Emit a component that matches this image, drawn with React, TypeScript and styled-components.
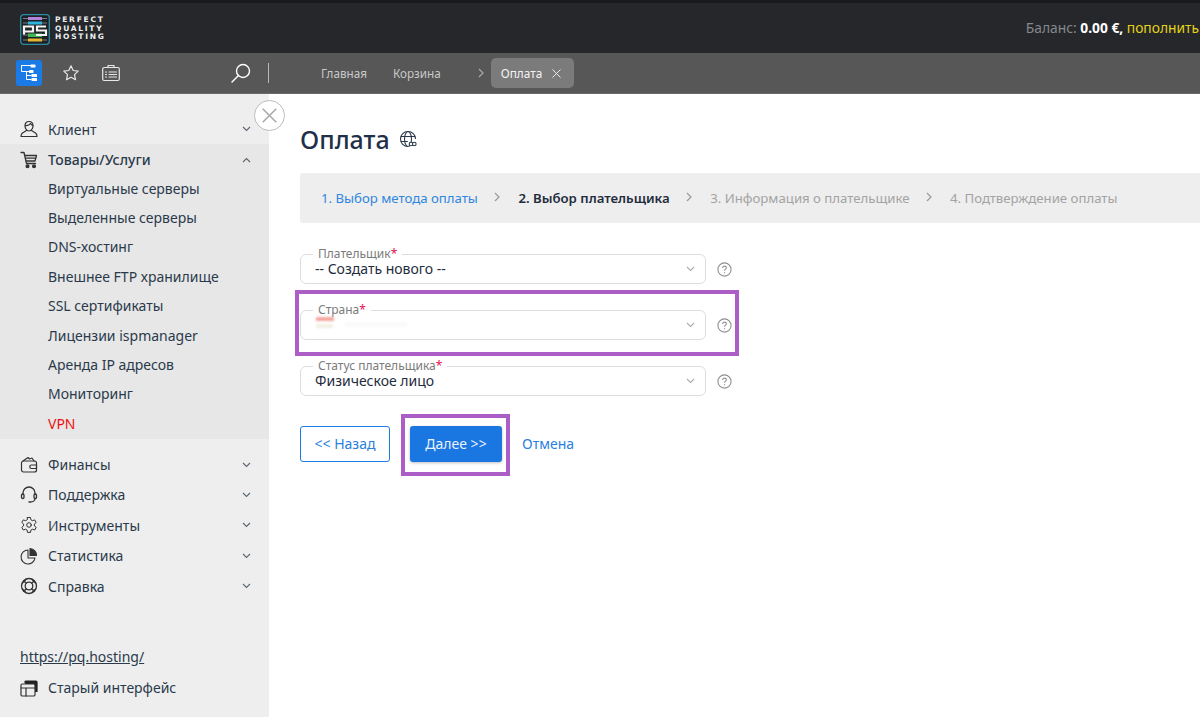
import React from "react";
import styled, { createGlobalStyle } from "styled-components";

const Global = createGlobalStyle`
  html, body { margin: 0; padding: 0; background: #fff; }
  body { font-family: "Noto Sans", "Open Sans", sans-serif; font-size: 14px; color: #2b3a4b; overflow: hidden; }
  * { box-sizing: border-box; }
`;

const Page = styled.div`
  width: 1200px; height: 723px; display: flex; flex-direction: column; overflow: hidden;
`;
const Header = styled.header`
  height: 53px; flex: none; background: #25272b; border-top: 3px solid #1a191e;
  display: flex; align-items: center; justify-content: space-between; padding: 0 0 0 20px;
`;
const Logo = styled.div`display: flex; align-items: center; gap: 4px; margin-top: 2px;`;
const LogoWords = styled.div`
  display: flex; flex-direction: column; font-family: "DejaVu Sans", sans-serif; font-size: 7.5px; line-height: 8.8px;
  font-weight: 700; color: #eceff1; letter-spacing: 1.75px; text-transform: uppercase; margin-left: 1px;
`;
const Balance = styled.div`
  font-size: 13.8px; color: #85888c; white-space: nowrap; margin-top: -1px; padding-right: 1px;
  b { color: #fff; font-weight: 700; }
  span { color: #e6d21a; }
`;
const Toolbar = styled.div`
  height: 41px; flex: none; background: #575757; display: flex; align-items: center; border-bottom: 1px solid #6a6a6a;
`;
const ToolIcons = styled.div`
  width: 269px; flex: none; display: flex; align-items: center; padding-left: 16px; position: relative; height: 100%;
`;
const ActiveTool = styled.div`
  width: 26px; height: 26px; border-radius: 3px; background: #1a7be6; display: flex; align-items: center; justify-content: center;
`;
const ToolBtn = styled.div`
  width: 18px; height: 18px; margin-left: ${p => p.$ml}px; display: flex; align-items: center; justify-content: center; color: #e8e8e8;
`;
const SearchBtn = styled.div`margin-left: auto; margin-right: 17px; display: flex; color: #fff;`;
const Divider = styled.div`width: 1px; height: 20px; background: #b9b9b9;`;
const Crumbs = styled.nav`
  display: flex; align-items: center; font-size: 11.7px; color: #c9c9c9; padding-left: 52px; height: 100%;
`;
const Crumb = styled.span`margin-right: 26px;`;
const CrumbArrow = styled.span`display: flex; margin: 0 7px 0 37px; color: #a9a9a9;`;
const ActiveCrumb = styled.div`
  height: 30px; border-radius: 5px; background: #7b7b7b; color: #f4f4f4; display: flex; align-items: center; gap: 10px; padding: 0 13px 0 10px; font-size: 11.8px;
`;
const Body = styled.div`flex: 1; display: flex; min-height: 0; position: relative;`;
const Sidebar = styled.aside`
  width: 269px; flex: none; height: 623px; background: #eeeeee; padding-top: 20px; display: flex; flex-direction: column;
`;
const MenuRow = styled.div`
  height: ${p => p.$h || 30.4}px; display: flex; align-items: center; padding: ${p => (p.$bold ? "2px" : "0")} 18px 0 20px; font-size: 14px;
  color: #2b3a4b; font-weight: ${p => (p.$bold ? 500 : 400)};
`;
const MenuIcon = styled.span`width: 18px; height: 18px; display: flex; margin-right: 10px; color: #333;`;
const MenuLabel = styled.span`flex: 1;`;
const Chevron = styled.span`display: flex; color: #5b6670;`;
const OpenGroup = styled.div`background: #e7e7e7; margin-bottom: 10.500px; padding-bottom: 1px;`;
const SubItem = styled.div`
  height: 29.4px; display: flex; align-items: center; padding-left: 48px; font-size: 14px; color: ${p => (p.$red ? "#ee1111" : "#2b3a4b")};
`;
const SideFoot = styled.div`margin-top: 41px;`;
const FootLink = styled.a`
  display: block; padding-left: 20px; height: 30px; line-height: 30px; color: #2b3a4b; font-size: 14px; text-decoration: underline;
`;
const CloseBall = styled.div`
  position: absolute; left: 254px; top: 6px; width: 31px; height: 31px; border-radius: 50%; background: #fff; border: 1px solid #bdbdbd;
  display: flex; align-items: center; justify-content: center; color: #a8a8a8;
`;
const Main = styled.main`flex: 1; padding: 29px 0 0 31px; min-width: 0;`;
const Title = styled.h1`
  margin: 0; display: flex; align-items: center; gap: 9px; font-size: 25px; line-height: 32px; font-weight: 500; color: #1f3049;
`;
const StepsBar = styled.div`
  margin-top: 18px; height: 50px; background: #eeeeee; border-radius: 3px 0 0 3px; display: flex; align-items: center; padding-left: 21px; font-size: 13.2px; white-space: nowrap;
`;
const Step = styled.span`
  color: ${p => (p.$state === "done" ? "#2f86e0" : p.$state === "now" ? "#1f2c3d" : "#a3a3a3")};
  font-weight: ${p => (p.$state === "now" ? 600 : 400)};
`;
const StepArrow = styled.span`display: flex; margin: -2px 18.500px 0 16px; color: #9a9a9a;`;
const Fields = styled.div`margin-top: 31px; display: flex; flex-direction: column; gap: 26px;`;
const FieldRow = styled.div`position: relative; display: flex; align-items: center; gap: 11px; width: 434px;`;
const SelectBox = styled.div`
  position: relative; width: 406px; height: 30px; border: 1px solid #dddddd; border-radius: 6px; padding: 0 10px 0 14px;
  font-size: 14px; line-height: 22px; color: #1f2c3d; background: #fff; display: flex; justify-content: space-between; align-items: center;
`;
const FloatLabel = styled.label`
  position: absolute; left: 12px; top: -8px; padding: 0 5px; background: #fff; font-size: 12px; line-height: 14px; color: #7b7b7b;
  i { color: #e6114d; font-style: normal; }
`;
const Help = styled.span`display: flex; color: #8f8f8f;`;
const SelectChevron = styled.span`display: flex; color: #a6aeb6;`;
const Blur = styled.span`display: inline-block; position: absolute; filter: blur(1px);`;
const Flag = styled(Blur)`left: 15px; top: 6px; width: 18px; height: 4px; background: #f4a79e;`;
const FlagLow = styled(Blur)`left: 15px; top: 13px; width: 17px; height: 4px; background: #f2efe6;`;
const Smudge = styled(Blur)`left: 44px; top: 11px; width: 62px; height: 5px; background: #fafafa;`;
const Highlight = styled.div`
  position: absolute; left: -5px; top: -20px; width: 444px; height: 66px; border: 4px solid #ab5fc6; pointer-events: none;
`;
const Actions = styled.div`margin-top: 30px; display: flex; align-items: center; font-size: 14px;`;
const BackBtn = styled.button`
  width: 90px; height: 36px; border: 1px solid #1a7be6; border-radius: 3px; background: #fff; color: #2a7fe0; font: inherit; font-size: 14px; padding: 0 0 2px;
`;
const NextWrap = styled.div`position: relative; margin-left: 20px;`;
const NextBtn = styled.button`
  display: block; width: 92px; height: 36px; border: 0; border-radius: 3px; background: #1a76e0; color: #e9f2fc; font: inherit; font-size: 14px; padding: 0 0 2px;
  box-shadow: 0 1px 3px rgba(0,0,0,.25);
`;
const NextMark = styled.div`
  position: absolute; left: -9px; top: -12px; width: 109px; height: 62px; border: 4px solid #ab5fc6; pointer-events: none;
`;
const Cancel = styled.a`margin: -2px 0 0 20px; color: #2a7fe0;`;

const Ic = ({ d, size = 18, sw = 1.2, children }: any) => (
  <svg width={size} height={size} viewBox="0 0 18 18" fill="none" stroke="currentColor" strokeWidth={sw} strokeLinecap="round" strokeLinejoin="round">
    {d && <path d={d} />}{children}
  </svg>
);
const ChevD = () => <svg width="9" height="6" viewBox="0 0 9 6" fill="none" stroke="currentColor" strokeWidth="1.1"><path d="M1 1l3.5 3.5L8 1" /></svg>;
const ChevU = () => <svg width="9" height="6" viewBox="0 0 9 6" fill="none" stroke="currentColor" strokeWidth="1.1"><path d="M1 5l3.5-3.5L8 5" /></svg>;
const ChevR = () => <svg width="6" height="10" viewBox="0 0 6 10" fill="none" stroke="currentColor" strokeWidth="1.2"><path d="M1 1l4 4-4 4" /></svg>;
const Cross = ({ s = 9 }: any) => <svg width={s} height={s} viewBox="0 0 10 10" fill="none" stroke="currentColor" strokeWidth="1"><path d="M.5.5l9 9M9.5.5l-9 9" /></svg>;
const HelpIcon = () => (
  <svg width="15" height="15" viewBox="0 0 15 15" fill="none" stroke="currentColor" strokeWidth="1.1">
    <circle cx="7.5" cy="7.5" r="6.6" />
    <path d="M5.6 5.9c0-1.2.9-1.8 1.9-1.8s1.9.6 1.9 1.7c0 1.3-1.9 1.4-1.9 2.9" />
    <path d="M7.5 10.2v1" />
  </svg>
);
const LogoMark = () => (
  <svg width="30" height="31" viewBox="0 0 30 31" fill="none">
    <rect x=".7" y=".7" width="28.6" height="29.6" rx="3" stroke="#2a8ca0" strokeWidth="1.3" fill="#1e2227" />
    <g stroke="#8d9499" strokeWidth=".8"><path d="M3 4.500h24M3 9h24M3 21h24M3 26h24" /></g>
    <rect x="8" y="3" width="14" height="3" fill="#b184d8" />
    <rect x="8" y="7.500" width="14" height="3" fill="#2db4dc" />
    <rect x="8" y="19.500" width="14" height="3.500" fill="#3cb754" />
    <rect x="8" y="24.500" width="14" height="3" fill="#e4b72e" />
    <path d="M4 20.500V12.500h9v5H5M26 12.500h-9v4h9v4.500h-10" stroke="#f4f4f4" strokeWidth="2.200" />
  </svg>
);
const TreeIcon = () => (
  <svg width="18" height="18" viewBox="0 0 18 18" fill="none" stroke="#fff" strokeWidth="1">
    <path d="M1 1.500h10M1.500 1.500v6h8M6.500 7.500v8h5M6.500 11.500h5" />
    <g fill="#fff" stroke="none"><rect x="10.500" y=".5" width="5" height="3" rx=".6" /><rect x="9" y="6" width="4.500" height="3" rx=".6" /><rect x="11.500" y="10" width="5.500" height="3" rx=".6" /><rect x="11.500" y="14" width="5.500" height="3" rx=".6" /></g>
  </svg>
);
const StarIcon = () => <Ic d="M9 1.800l2.200 4.700 5 .6-3.700 3.500 1 5.100L9 13.200l-4.500 2.500 1-5.100L1.800 7.100l5-.6z" />;
const CaseIcon = () => (
  <Ic size={18}>
    <rect x=".7" y="3.500" width="16.600" height="13" rx="1.500" /><path d="M6 3.500V1.500h6v2" />
    <path d="M7 8h7.500M7 10.500h7.500M7 13h7.500M3.500 8h1M3.500 10.500h1M3.500 13h1" />
  </Ic>
);
const SearchIcon = () => (
  <svg width="20" height="20" viewBox="0 0 20 20" fill="none" stroke="currentColor" strokeWidth="1.400" strokeLinecap="round">
    <circle cx="12" cy="8" r="6.500" /><path d="M7.500 12.500L1 19" />
  </svg>
);
const UserIcon = () => (
  <Ic><path d="M9 1.500c2.500 0 4 1.800 4 4.200S11.500 11 9 11 5 8.100 5 5.700 6.500 1.500 9 1.500z" /><path d="M5.500 5.500c2 .3 4-.5 5-2 .5 1 1.500 1.800 2.500 2" /><path d="M6.500 10.500L2.500 13c-1 .7-1.500 2-1.500 3.500h16c0-1.500-.5-2.800-1.500-3.500l-4-2.500" /></Ic>
);
const CartIcon = () => (
  <Ic sw={1.300}>
    <path d="M1 1.500h3l2.500 11h9" />
    <path d="M5 4.500h11.500L15 10H6.200" />
    <path d="M6 7.200h9.500" />
    <circle cx="7.500" cy="15.300" r="1.400" fill="#333" /><circle cx="14" cy="15.300" r="1.400" fill="#333" />
  </Ic>
);
const WalletIcon = () => (
  <Ic><rect x="1.500" y="5" width="15" height="11" rx="2" /><path d="M3 5l5-3.500 1.500 1.500L12 2l2 3M11.500 9h5v3.500h-5a1.700 1.700 0 010-3.500z" /></Ic>
);
const HeadsetIcon = () => (
  <Ic sw={1.300}><path d="M3 8.500V7a6 6 0 0112 0v1.500" /><rect x="1.500" y="8" width="2.500" height="4.500" rx="1.200" /><rect x="14" y="8" width="2.500" height="4.500" rx="1.200" /><path d="M15 12.500c0 2-2 3.500-4.500 3.500H9" /></Ic>
);
const GearIcon = () => (
  <Ic sw={1}><circle cx="9" cy="9" r="2.300" /><path d="M7.500 1.500h3l.4 2.300 1.600.9 2.200-.8 1.500 2.600-1.800 1.500v1.900l1.800 1.500-1.500 2.600-2.200-.8-1.600.9-.4 2.300h-3l-.4-2.300-1.600-.9-2.200.8-1.500-2.600 1.800-1.500V8L1.800 6.500l1.500-2.600 2.200.8 1.600-.9z" /></Ic>
);
const PieIcon = () => (
  <Ic sw={1.100}><path d="M8 3a7 7 0 107 8H8z" /><path d="M10 1.500a7 7 0 016.500 7H10z" fill="#333" /></Ic>
);
const RingIcon = () => (
  <Ic sw={1.300}><circle cx="9" cy="9" r="7.500" /><circle cx="9" cy="9" r="3.800" /><path d="M3.700 3.700l2.600 2.600M14.300 3.700l-2.600 2.600M3.700 14.300l2.600-2.600M14.300 14.300l-2.600-2.600M6 2.500l-3.500 3.500M12 2.500l3.500 3.500M2.500 12L6 15.500M15.500 12L12 15.500" /></Ic>
);
const WindowsIcon = () => (
  <Ic><path d="M5 3.500V3a1 1 0 011-1h10a1 1 0 011 1v9.500h-2.500z" fill="#222" stroke="#222" /><rect x="1" y="5" width="14" height="12" rx="1.300" fill="#eee" /><path d="M1 9h14M6 9v8" /></Ic>
);
const GlobeIcon = () => (
  <svg width="18" height="18" viewBox="0 0 18 18" fill="none" stroke="#2b3a4b" strokeWidth="1.100">
    <path d="M9 16.500a7.500 7.500 0 117.500-7.500" /><ellipse cx="9" cy="9" rx="3.500" ry="7.500" /><path d="M1.800 6.500h14.400M1.800 11.500h7" />
    <circle cx="12" cy="14" r="1.800" fill="#fff" /><circle cx="15.300" cy="14" r="1.800" fill="#fff" />
  </svg>
);

const subs = ["Виртуальные серверы", "Выделенные серверы", "DNS-хостинг", "Внешнее FTP хранилище", "SSL сертификаты", "Лицензии ispmanager", "Аренда IP адресов", "Мониторинг"];
const lower: [string, React.ReactNode][] = [["Финансы", <WalletIcon />], ["Поддержка", <HeadsetIcon />], ["Инструменты", <GearIcon />], ["Статистика", <PieIcon />], ["Справка", <RingIcon />]];

const Field = ({ label, value, children }: any) => (
  <FieldRow>
    <SelectBox>
      <FloatLabel>{label}<i>*</i></FloatLabel>
      <span>{value}</span>
      <SelectChevron><ChevD /></SelectChevron>
      {children}
    </SelectBox>
    <Help><HelpIcon /></Help>
  </FieldRow>
);

export default function App() {
  return (
    <Page>
      <Global />
      <Header>
        <Logo>
          <LogoMark />
          <LogoWords><span>Perfect</span><span>Quality</span><span>Hosting</span></LogoWords>
        </Logo>
        <Balance>Баланс: <b>0.00 €,</b> <span>пополнить</span></Balance>
      </Header>
      <Toolbar>
        <ToolIcons>
          <ActiveTool><TreeIcon /></ActiveTool>
          <ToolBtn $ml={20}><StarIcon /></ToolBtn>
          <ToolBtn $ml={22}><CaseIcon /></ToolBtn>
          <SearchBtn><SearchIcon /></SearchBtn>
          <Divider />
        </ToolIcons>
        <Crumbs>
          <Crumb>Главная</Crumb>
          <span>Корзина</span>
          <CrumbArrow><ChevR /></CrumbArrow>
          <ActiveCrumb>Оплата <Cross /></ActiveCrumb>
        </Crumbs>
      </Toolbar>
      <Body>
        <Sidebar>
          <MenuRow><MenuIcon><UserIcon /></MenuIcon><MenuLabel>Клиент</MenuLabel><Chevron><ChevD /></Chevron></MenuRow>
          <OpenGroup>
            <MenuRow $bold $h={29}><MenuIcon><CartIcon /></MenuIcon><MenuLabel>Товары/Услуги</MenuLabel><Chevron><ChevU /></Chevron></MenuRow>
            {subs.map(s => <SubItem key={s}>{s}</SubItem>)}
            <SubItem $red>VPN</SubItem>
          </OpenGroup>
          {lower.map(([l, ic]) => (
            <MenuRow key={l}><MenuIcon>{ic}</MenuIcon><MenuLabel>{l}</MenuLabel><Chevron><ChevD /></Chevron></MenuRow>
          ))}
          <SideFoot>
            <FootLink>https://pq.hosting/</FootLink>
            <MenuRow><MenuIcon><WindowsIcon /></MenuIcon><MenuLabel>Старый интерфейс</MenuLabel></MenuRow>
          </SideFoot>
        </Sidebar>
        <CloseBall><Cross s={15} /></CloseBall>
        <Main>
          <Title>Оплата <GlobeIcon /></Title>
          <StepsBar>
            <Step $state="done">1. Выбор метода оплаты</Step>
            <StepArrow><ChevR /></StepArrow>
            <Step $state="now">2. Выбор плательщика</Step>
            <StepArrow><ChevR /></StepArrow>
            <Step>3. Информация о плательщике</Step>
            <StepArrow><ChevR /></StepArrow>
            <Step>4. Подтверждение оплаты</Step>
          </StepsBar>
          <Fields>
            <Field label="Плательщик" value="-- Создать нового --" />
            <div style={{ position: "relative" }}>
              <Field label="Страна" value="">
                <Flag /><FlagLow /><Smudge />
              </Field>
              <Highlight />
            </div>
            <Field label="Статус плательщика" value="Физическое лицо" />
          </Fields>
          <Actions>
            <BackBtn>&lt;&lt; Назад</BackBtn>
            <NextWrap><NextBtn>Далее &gt;&gt;</NextBtn><NextMark /></NextWrap>
            <Cancel>Отмена</Cancel>
          </Actions>
        </Main>
      </Body>
    </Page>
  );
}
